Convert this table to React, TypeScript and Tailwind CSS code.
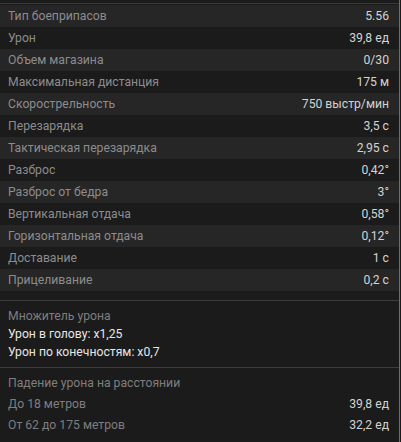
import React from "react";

const rows: [string, string][] = [
  ["Тип боеприпасов", "5.56"],
  ["Урон", "39,8 ед"],
  ["Объем магазина", "0/30"],
  ["Максимальная дистанция", "175 м"],
  ["Скорострельность", "750 выстр/мин"],
  ["Перезарядка", "3,5 с"],
  ["Тактическая перезарядка", "2,95 с"],
  ["Разброс", "0,42°"],
  ["Разброс от бедра", "3°"],
  ["Вертикальная отдача", "0,58°"],
  ["Горизонтальная отдача", "0,12°"],
  ["Доставание", "1 с"],
  ["Прицеливание", "0,2 с"],
];

export default function App() {
  return (
    <div
      className="w-[401px] h-[442px] bg-[#1b1b1b] overflow-hidden"
      style={{ fontFamily: "Roboto, 'Liberation Sans', sans-serif" }}
    >
      <div className="w-[400px] h-[442px] border-r border-[#6e6e6e] pt-[3px] text-[12.2px]">
        <div className="border-t border-[#3a3a3a] pt-px">
          {rows.map(([k, v], i) => (
            <div
              key={k}
              className={`h-[22px] flex items-center justify-between pl-2 pr-[10px] ${
                i % 2 === 0 ? "bg-[#262626]" : "bg-[#1b1b1b]"
              }`}
            >
              <span className="text-[#8c8c8c]">{k}</span>
              <span className="text-[#d2d2d2]">{v}</span>
            </div>
          ))}
        </div>
        <div className="mt-[9px] border-t border-[#3c3c3c] pt-[6px] pb-[6px] pl-2">
          <div className="h-[18px] leading-[18px] text-[#7e7e7e]">Множитель урона</div>
          <div className="h-[18px] leading-[18px] text-[#e6e6e6]">Урон в голову: x1,25</div>
          <div className="h-[18px] leading-[18px] text-[#e6e6e6]">Урон по конечностям: x0,7</div>
        </div>
        <div className="border-t border-[#3c3c3c] pt-[6px] pl-2 pr-[10px]">
          <div className="h-[18px] leading-[18px] text-[#7e7e7e]">Падение урона на расстоянии</div>
          <div className="mt-[2px] h-[21px] flex items-center justify-between">
            <span className="text-[#7e7e7e]">До 18 метров</span>
            <span className="text-[#d2d2d2]">39,8 ед</span>
          </div>
          <div className="h-[21px] flex items-center justify-between">
            <span className="text-[#7e7e7e]">От 62 до 175 метров</span>
            <span className="text-[#d2d2d2]">32,2 ед</span>
          </div>
        </div>
      </div>
    </div>
  );
}
